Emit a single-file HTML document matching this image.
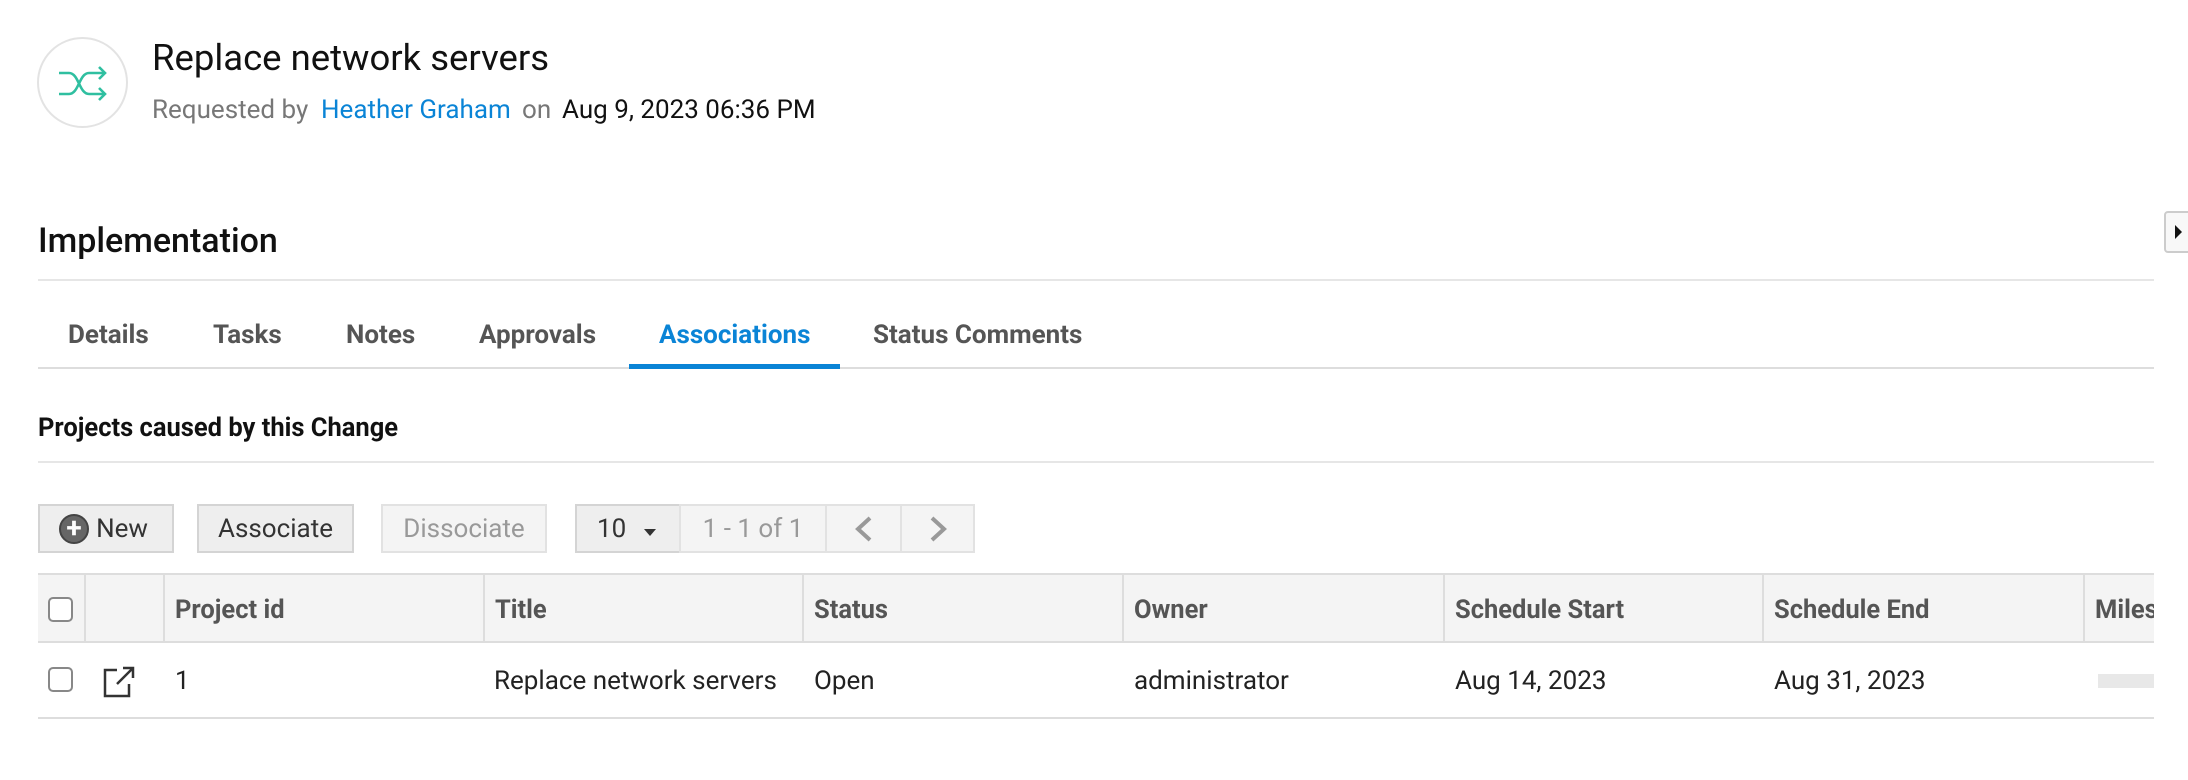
<!DOCTYPE html>
<html><head><meta charset="utf-8"><style>
*{margin:0;padding:0;box-sizing:border-box}
body{width:2188px;height:780px;background:#fff;position:relative;overflow:hidden;font-family:"Roboto","Liberation Sans",sans-serif;color:#222}
.a{position:absolute;white-space:nowrap}
.hr{position:absolute;left:38px;width:2116px;background:#e6e6e6;height:2px}
.btn{position:absolute;top:504px;height:49px;border:2px solid #d4d4d4;background:#eee;font-size:26px;line-height:47px;color:#333;text-align:center}
.th{position:absolute;top:575px;height:68px;line-height:71px;font-size:25.5px;font-weight:bold;color:#555;padding-left:10px;border-left:2px solid #ddd}
.td{position:absolute;top:660px;line-height:42px;font-size:26px;color:#222}
.cb{position:absolute;left:48px;width:25px;height:25px;border:2px solid #888;border-radius:5px;background:#fff}
.tab{position:absolute;top:320px;font-size:26px;font-weight:bold;color:#555}
</style></head><body>
<div class="a" style="left:37px;top:37px;width:91px;height:91px;border:2px solid #e3e3e3;border-radius:50%"></div>
<svg class="a" style="left:55px;top:60px" width="55" height="45" viewBox="0 0 55 45" fill="none" stroke="#2fbfa0" stroke-width="2.6">
<path d="M4 13 H14 C24 13 24 34 34 34 H50"/><path d="M4 34 H14 C24 34 24 13 34 13 H50"/>
<path d="M44 7 L50 13 L44 19"/><path d="M44 28 L50 34 L44 40"/></svg>
<div class="a" style="left:152px;top:36px;font-size:36.5px;color:#111">Replace network servers</div>
<div class="a" style="left:152px;top:95px;font-size:26px;color:#777">Requested by</div>
<div class="a" style="left:321px;top:95px;font-size:26px;color:#0a84d6">Heather Graham</div>
<div class="a" style="left:522px;top:95px;font-size:26px;color:#777">on</div>
<div class="a" style="left:562px;top:95px;font-size:26px;color:#111">Aug 9, 2023 06:36 PM</div>
<div class="a" style="left:2164px;top:211px;width:30px;height:42px;border:2px solid #ccc;border-radius:4px;background:#f8f8f8"></div>
<div class="a" style="left:2175px;top:225px;width:0;height:0;border-left:7px solid #111;border-top:7px solid transparent;border-bottom:7px solid transparent"></div>
<div class="a" style="left:38px;top:221px;font-size:34px;color:#111;font-weight:500">Implementation</div>
<div class="hr" style="top:279px"></div>
<div class="tab" style="left:68px">Details</div>
<div class="tab" style="left:213px">Tasks</div>
<div class="tab" style="left:346px">Notes</div>
<div class="tab" style="left:479px">Approvals</div>
<div class="tab" style="left:659px;color:#0a84d6">Associations</div>
<div class="tab" style="left:873px">Status Comments</div>
<div class="hr" style="top:367px;background:#ddd"></div>
<div class="a" style="left:629px;top:364px;width:211px;height:5px;background:#0a84d6"></div>
<div class="a" style="left:38px;top:413px;font-size:25.5px;font-weight:bold;color:#111">Projects caused by this Change</div>
<div class="hr" style="top:461px"></div>
<div class="btn" style="left:38px;width:136px;padding-left:32px">New</div>
<div class="a" style="left:59px;top:514px;width:30px;height:30px;border-radius:50%;background:#666;border:2px solid #444;color:#fff;font-size:28px;line-height:24px;text-align:center;font-weight:bold">+</div>
<div class="btn" style="left:197px;width:157px">Associate</div>
<div class="btn" style="left:381px;width:166px;background:#f4f4f4;color:#999;border-color:#e2e2e2">Dissociate</div>
<div class="btn" style="left:575px;width:106px;text-align:left;padding-left:20px">10</div>
<div class="a" style="left:644px;top:529px;border-top:7px solid #333;border-left:6px solid transparent;border-right:6px solid transparent"></div>
<div class="btn" style="left:679px;width:148px;background:#f4f4f4;color:#999;border-color:#e2e2e2">1 - 1 of 1</div>
<div class="btn" style="left:825px;width:77px;background:#f4f4f4;border-color:#e2e2e2"></div>
<div class="btn" style="left:900px;width:75px;background:#f4f4f4;border-color:#e2e2e2"></div>
<svg class="a" style="left:850px;top:516px" width="30" height="26" fill="none" stroke="#999" stroke-width="4"><path d="M20 2 L8 13 L20 24"/></svg>
<svg class="a" style="left:924px;top:516px" width="30" height="26" fill="none" stroke="#999" stroke-width="4"><path d="M8 2 L20 13 L8 24"/></svg>
<div class="a" style="left:38px;top:573px;width:2116px;height:70px;background:#f4f4f4;border-top:2px solid #ddd;border-bottom:2px solid #ddd"></div>
<div class="cb" style="top:597px"></div>
<div class="th" style="left:84px;width:79px"></div>
<div class="th" style="left:163px">Project id</div>
<div class="th" style="left:483px">Title</div>
<div class="th" style="left:802px">Status</div>
<div class="th" style="left:1122px">Owner</div>
<div class="th" style="left:1443px">Schedule Start</div>
<div class="th" style="left:1762px">Schedule End</div>
<div class="th" style="left:2083px;width:71px;overflow:hidden">Milestones</div>
<div class="cb" style="top:667px"></div>
<svg class="a" style="left:103px;top:666px" width="32" height="32" fill="none" stroke="#333" stroke-width="2.5"><path d="M14 4 H2 V30 H26 V18"/><path d="M14 18 L30 2 M20 2 H30 V12"/></svg>
<div class="td" style="left:175px">1</div>
<div class="td" style="left:494px">Replace network servers</div>
<div class="td" style="left:814px">Open</div>
<div class="td" style="left:1134px">administrator</div>
<div class="td" style="left:1455px">Aug 14, 2023</div>
<div class="td" style="left:1774px">Aug 31, 2023</div>
<div class="a" style="left:2098px;top:674px;width:56px;height:14px;background:#e8e8e8"></div>
<div class="hr" style="top:717px;background:#ddd"></div>
</body></html>
